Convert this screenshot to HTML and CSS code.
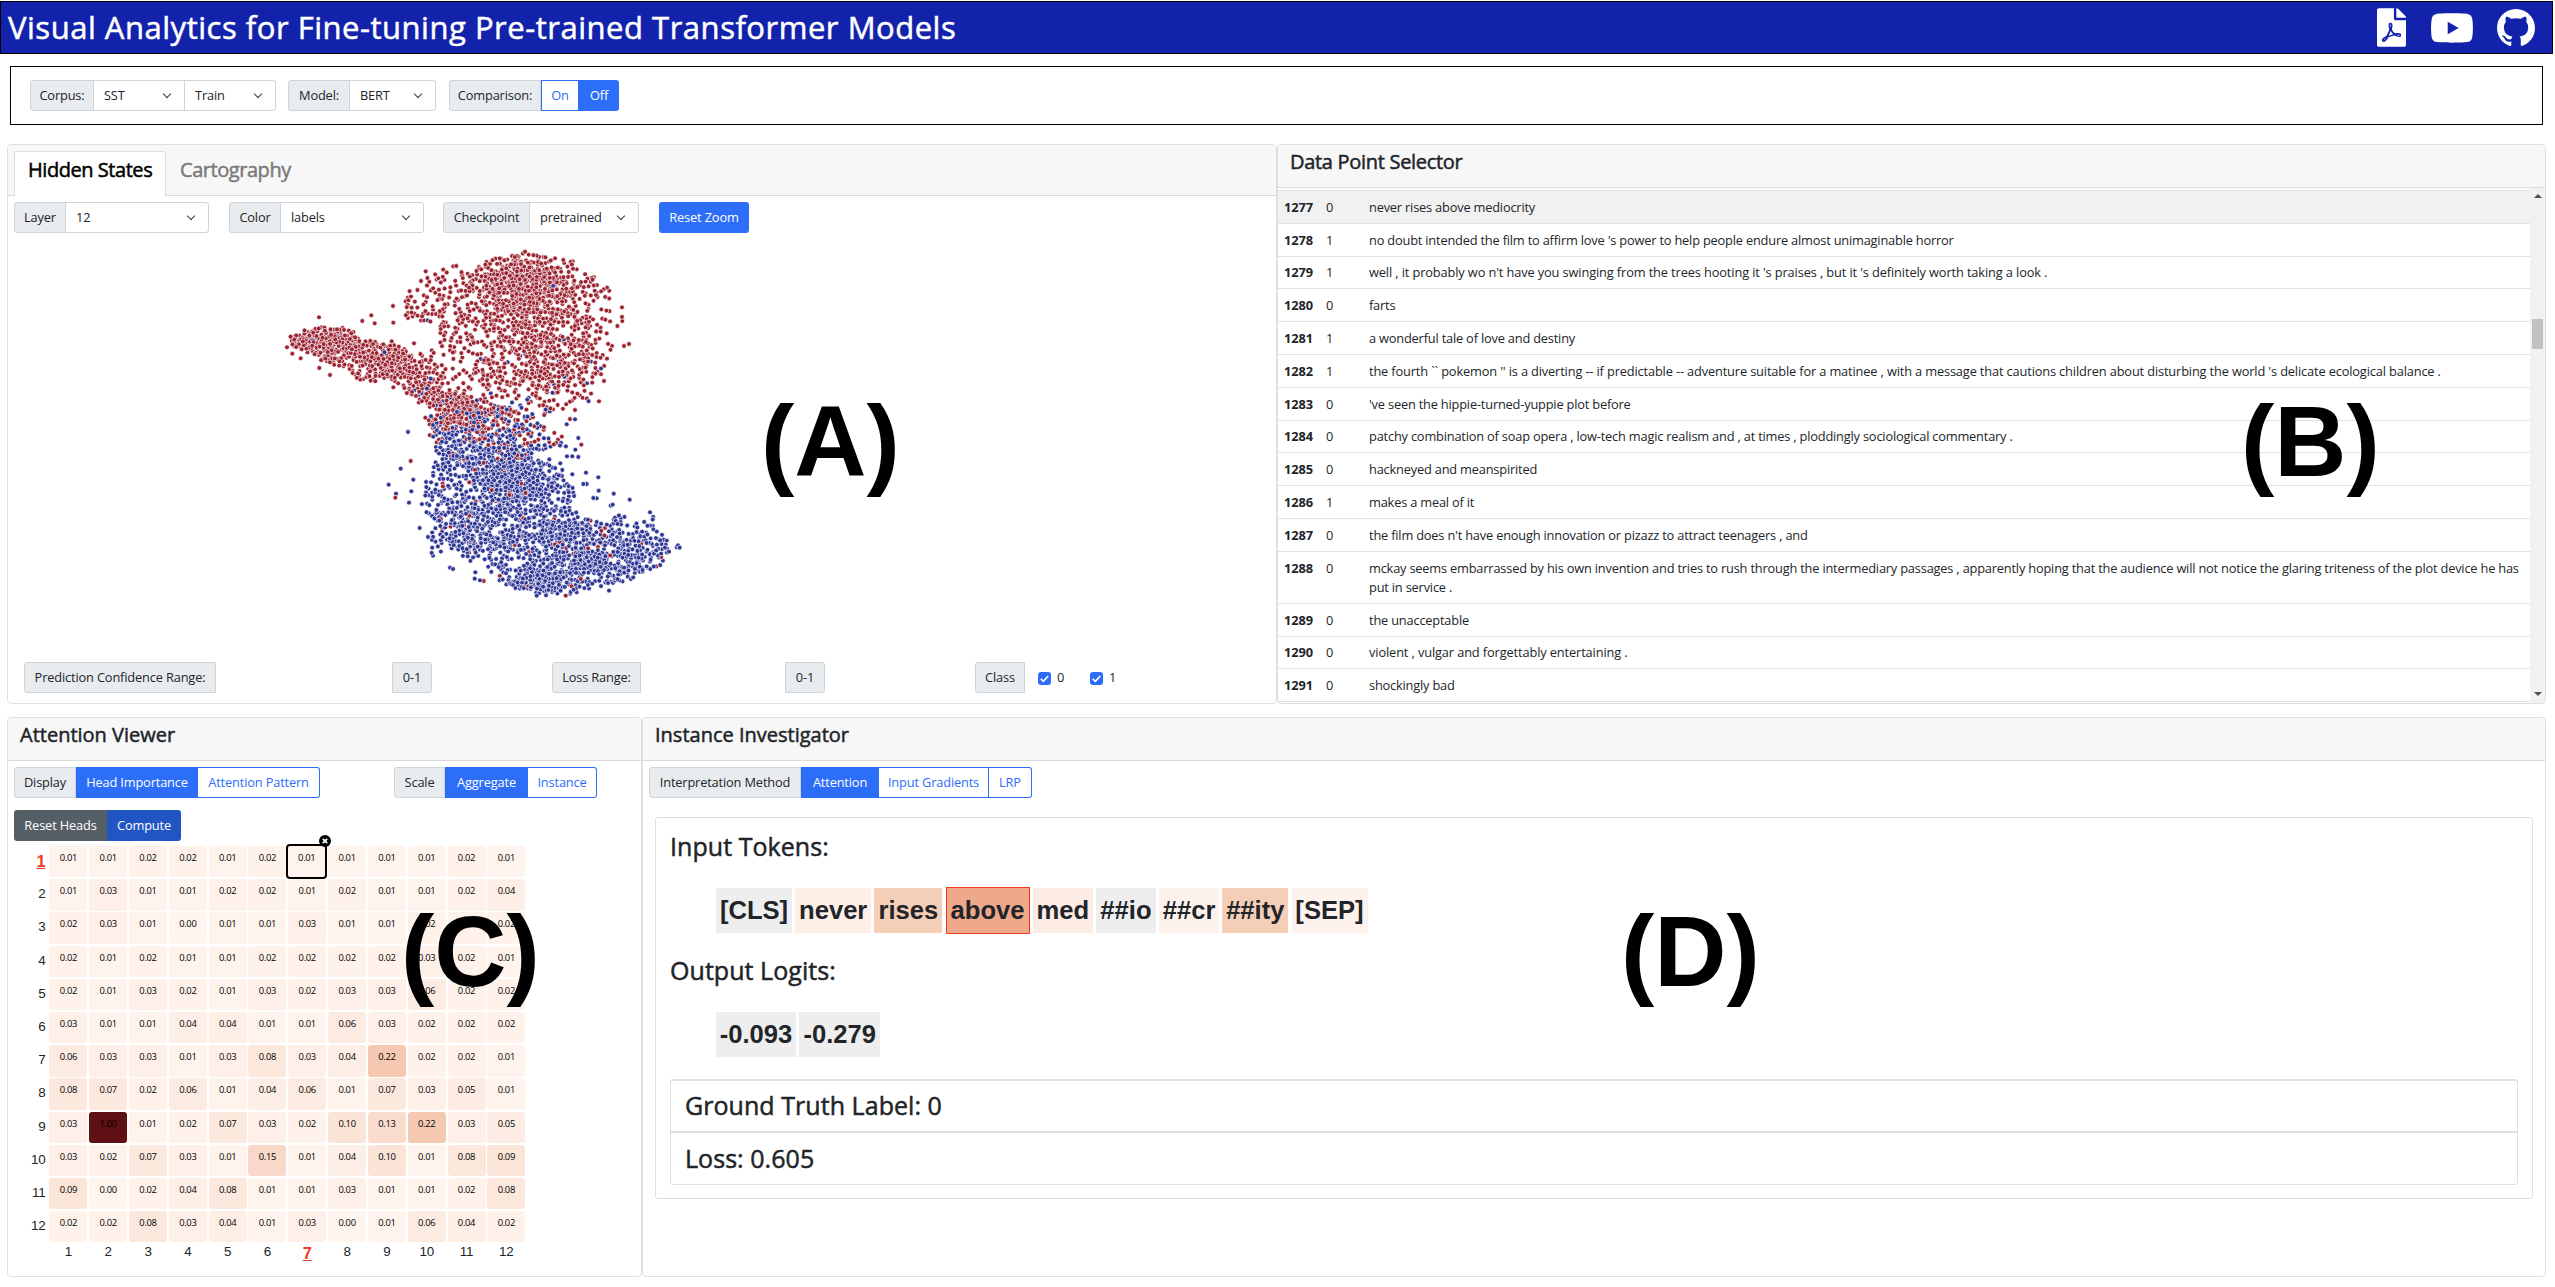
FILE: index.html
```html
<!DOCTYPE html>
<html lang="en">
<head>
<meta charset="utf-8">
<title>Visual Analytics for Fine-tuning Pre-trained Transformer Models</title>
<link rel="stylesheet" href="styles.css">
</head>
<body>
<header class="navbar">
  <h1 class="brand">Visual Analytics for Fine-tuning Pre-trained Transformer Models</h1>
  <nav class="links">
    <svg width="29" height="39" viewBox="0 0 384 512"><path d="M181.9 256.1c-5-16-4.9-46.9-2-46.9 8.4 0 7.6 36.9 2 46.9zm-1.7 47.2c-7.7 20.2-17.3 43.3-28.4 62.7 18.3-7 39-17.2 62.9-21.9-12.7-9.6-24.9-23.4-34.5-40.8zM86.1 428.1c0 .8 13.2-5.4 34.9-40.2-6.7 6.3-29.1 24.5-34.9 40.2zM248 160h136v328c0 13.3-10.7 24-24 24H24c-13.3 0-24-10.7-24-24V24C0 10.7 10.7 0 24 0h200v136c0 13.2 10.8 24 24 24zm-8 171.8c-20-12.2-33.3-29-42.7-53.8 4.5-18.5 11.6-46.6 6.2-64.2-4.7-29.4-42.4-26.5-47.8-6.8-5 18.3-.4 44.1 8.1 77-11.6 27.6-28.7 64.6-40.8 85.8-.1 0-.1.1-.2.1-27.1 13.9-73.6 44.5-54.5 68 5.6 6.9 16 10 21.5 10 17.9 0 35.7-18 61.1-61.8 25.8-8.5 54.1-19.1 79-23.2 21.7 11.8 47.1 19.5 64 19.5 29.2 0 31.2-32 19.7-43.4-13.9-13.6-54.3-9.7-73.6-7.2zM377 105L279 7c-4.5-4.5-10.6-7-17-7h-6v128h128v-6.1c0-6.3-2.5-12.4-7-16.9zm-74.1 255.3c4.1-2.7-2.5-11.9-42.8-9 37.1 15.8 42.8 9 42.8 9z"/></svg>
    <svg width="42" height="30" viewBox="14 64 548 384"><path d="M549.655 124.083c-6.281-23.65-24.787-42.276-48.284-48.597C458.781 64 288 64 288 64S117.22 64 74.629 75.486c-23.497 6.322-42.003 24.947-48.284 48.597-11.412 42.867-11.412 132.305-11.412 132.305s0 89.438 11.412 132.305c6.281 23.65 24.787 41.5 48.284 47.821C117.22 448 288 448 288 448s170.78 0 213.371-11.486c23.497-6.321 42.003-24.171 48.284-47.821 11.412-42.867 11.412-132.305 11.412-132.305s0-89.438-11.412-132.305zm-317.51 213.508V175.185l142.739 81.205-142.739 81.201z"/></svg>
    <svg width="38" height="38" viewBox="0 0 16 16"><path d="M8 0C3.58 0 0 3.58 0 8c0 3.54 2.29 6.53 5.47 7.59.4.07.55-.17.55-.38 0-.19-.01-.82-.01-1.49-2.01.37-2.53-.49-2.69-.94-.09-.23-.48-.94-.82-1.13-.28-.15-.68-.52-.01-.53.63-.01 1.08.58 1.23.82.72 1.21 1.87.87 2.33.66.07-.52.28-.87.51-1.07-1.78-.2-3.64-.89-3.64-3.95 0-.87.31-1.59.82-2.15-.08-.2-.36-1.02.08-2.12 0 0 .67-.21 2.2.82.64-.18 1.32-.27 2-.27.68 0 1.36.09 2 .27 1.53-1.04 2.2-.82 2.2-.82.44 1.1.16 1.92.08 2.12.51.56.82 1.27.82 2.15 0 3.07-1.87 3.75-3.65 3.95.29.25.54.73.54 1.48 0 1.07-.01 1.93-.01 2.2 0 .21.15.46.55.38A8.013 8.013 0 0016 8c0-4.42-3.58-8-8-8z"/></svg>
  </nav>
</header>

<section class="toolbar">
  <div class="group"><span class="label w64">Corpus:</span><span class="select w92">SST<i></i></span><span class="select w92">Train<i></i></span></div>
  <div class="group"><span class="label w62">Model:</span><span class="select w87">BERT<i></i></span></div>
  <div class="group compare"><span class="label w92">Comparison:</span><span class="btn outline w38">On</span><span class="btn solid w40">Off</span></div>
</section>

<main>
  <div class="row">
    <section class="card states">
      <div class="tabs"><h2 class="tab active">Hidden States</h2><h2 class="tab">Cartography</h2></div>
      <div class="controls">
        <div class="group"><span class="label w52">Layer</span><span class="select w144">12<i></i></span></div>
        <div class="group"><span class="label w52">Color</span><span class="select w144">labels<i></i></span></div>
        <div class="group ckpt"><span class="label w87">Checkpoint</span><span class="select w110">pretrained<i></i></span></div>
        <span class="btn solid round w90">Reset Zoom</span>
      </div>
      <svg class="scatter" id="scatter" width="1250" height="430"></svg>
      <div class="filters">
        <span class="label f-pred">Prediction Confidence Range:</span>
        <span class="label right f-val">0-1</span>
        <span class="label f-loss">Loss Range:</span>
        <span class="label right f-val2">0-1</span>
        <span class="label f-class">Class</span>
        <span class="check"><svg viewBox="0 0 14 14" width="13" height="13"><path d="M3 7.4 5.8 10 11 4.3"/></svg>0</span>
        <span class="check"><svg viewBox="0 0 14 14" width="13" height="13"><path d="M3 7.4 5.8 10 11 4.3"/></svg>1</span>
      </div>
    </section>

    <section class="card selector">
      <div class="card-head"><h2 class="ds">Data Point Selector</h2></div>
      <div class="scroller">
        <div class="rows">
          <div class="item hover"><b>1277</b><span>0</span><p>never rises above mediocrity</p></div>
          <div class="item"><b>1278</b><span>1</span><p>no doubt intended the film to affirm love 's power to help people endure almost unimaginable horror</p></div>
          <div class="item"><b>1279</b><span>1</span><p class="wide">well , it probably wo n't have you swinging from the trees hooting it 's praises , but it 's definitely worth taking a look .</p></div>
          <div class="item"><b>1280</b><span>0</span><p>farts</p></div>
          <div class="item"><b>1281</b><span>1</span><p>a wonderful tale of love and destiny</p></div>
          <div class="item"><b>1282</b><span>1</span><p class="wide2">the fourth `` pokemon '' is a diverting -- if predictable -- adventure suitable for a matinee , with a message that cautions children about disturbing the world 's delicate ecological balance .</p></div>
          <div class="item"><b>1283</b><span>0</span><p>'ve seen the hippie-turned-yuppie plot before</p></div>
          <div class="item"><b>1284</b><span>0</span><p>patchy combination of soap opera , low-tech magic realism and , at times , ploddingly sociological commentary .</p></div>
          <div class="item"><b>1285</b><span>0</span><p>hackneyed and meanspirited</p></div>
          <div class="item"><b>1286</b><span>1</span><p>makes a meal of it</p></div>
          <div class="item"><b>1287</b><span>0</span><p>the film does n't have enough innovation or pizazz to attract teenagers , and</p></div>
          <div class="item tall"><b>1288</b><span>0</span><p>mckay seems embarrassed by his own invention and tries to rush through the intermediary passages , apparently hoping that the audience will not notice the glaring triteness of the plot device he has<br>put in service .</p></div>
          <div class="item"><b>1289</b><span>0</span><p>the unacceptable</p></div>
          <div class="item"><b>1290</b><span>0</span><p class="wide">violent , vulgar and forgettably entertaining .</p></div>
          <div class="item"><b>1291</b><span>0</span><p>shockingly bad</p></div>
        </div>
        <div class="scrollbar"><i class="up"></i><div class="thumb"></div><i class="down"></i></div>
      </div>
    </section>
  </div>

  <div class="row">
    <section class="card attention">
      <div class="card-head"><h2>Attention Viewer</h2></div>
      <div class="controls c2">
        <div class="group"><span class="label w62">Display</span><span class="btn solid w122">Head Importance</span><span class="btn outline last w122">Attention Pattern</span></div>
        <div class="group"><span class="label w51">Scale</span><span class="btn solid w83">Aggregate</span><span class="btn outline last w69">Instance</span></div>
      </div>
      <div class="actions"><span class="btn grey">Reset Heads</span><span class="btn navy">Compute</span></div>
      <div class="heat" id="heat"></div>
    </section>

    <section class="card investigator">
      <div class="card-head"><h2>Instance Investigator</h2></div>
      <div class="controls c2">
        <div class="group"><span class="label w152">Interpretation Method</span><span class="btn solid w78">Attention</span><span class="btn outline mid w110">Input Gradients</span><span class="btn outline last w43">LRP</span></div>
      </div>
      <div class="panel">
        <h3 class="t1">Input Tokens:</h3>
        <div class="tokens">
          <span class="tk g" style="width:76px">[CLS]</span><span class="tk p1" style="width:76px">never</span><span class="tk p3" style="width:68px">rises</span><span class="tk sel" style="width:84px">above</span><span class="tk p2" style="width:60px">med</span><span class="tk g" style="width:60px">##io</span><span class="tk p0" style="width:60px">##cr</span><span class="tk p3" style="width:66px">##ity</span><span class="tk p0" style="width:76px">[SEP]</span>
        </div>
        <h3 class="t2">Output Logits:</h3>
        <div class="tokens"><span class="tk g" style="width:80px">-0.093</span><span class="tk g" style="width:81px">-0.279</span></div>
        <div class="facts">
          <h3>Ground Truth Label: 0</h3>
          <h3>Loss: 0.605</h3>
        </div>
      </div>
    </section>
  </div>
</main>

<div class="mark ma">(A)</div>
<div class="mark mb">(B)</div>
<div class="mark mc">(C)</div>
<div class="mark md">(D)</div>
<script src="app.js"></script>
</body>
</html>
```
FILE: app.js
```js
// Head importance, one row per layer
const importance = `
.01 .01 .02 .02 .01 .02 .01 .01 .01 .01 .02 .01
.01 .03 .01 .01 .02 .02 .01 .02 .01 .01 .02 .04
.02 .03 .01 .00 .01 .01 .03 .01 .01 .02 .02 .02
.02 .01 .02 .01 .01 .02 .02 .02 .02 .03 .02 .01
.02 .01 .03 .02 .01 .03 .02 .03 .03 .06 .02 .02
.03 .01 .01 .04 .04 .01 .01 .06 .03 .02 .02 .02
.06 .03 .03 .01 .03 .08 .03 .04 .22 .02 .02 .01
.08 .07 .02 .06 .01 .04 .06 .01 .07 .03 .05 .01
.03 1 .01 .02 .07 .03 .02 .10 .13 .22 .03 .05
.03 .02 .07 .03 .01 .15 .01 .04 .10 .01 .08 .09
.09 .00 .02 .04 .08 .01 .01 .03 .01 .01 .02 .08
.02 .02 .08 .03 .04 .01 .03 .00 .01 .06 .04 .02`.trim().split('\n').map(r => r.split(' ').map(Number));

const stops = [[0, 255, 245, 239], [.03, 254, 240, 232], [.08, 251, 231, 220], [.15, 249, 216, 201], [.22, 245, 201, 177], [1, 95, 16, 20]];
function shade(v) {
  let i = 1;
  while (i < stops.length - 1 && v > stops[i][0]) i++;
  const a = stops[i - 1], b = stops[i], t = (v - a[0]) / (b[0] - a[0]);
  return `rgb(${[1, 2, 3].map(k => Math.round(a[k] + (b[k] - a[k]) * t)).join(',')})`;
}

const closeIcon = '<svg class="close" width="12" height="12" viewBox="0 0 12 12"><circle cx="6" cy="6" r="6"/><path d="M3.8 3.8l4.4 4.4M8.2 3.8L3.8 8.2"/></svg>';
let html = '';
importance.forEach((row, r) => {
  html += `<span class="rl${r === 0 ? ' on' : ''}">${r + 1}</span>`;
  row.forEach((v, c) => {
    const on = r === 0 && c === 6;
    html += `<span class="cell${on ? ' picked' : ''}" style="background:${shade(v)}">${v.toFixed(2)}${on ? closeIcon : ''}</span>`;
  });
});
html += '<span></span>';
for (let c = 1; c <= 12; c++) html += `<span class="cl${c === 7 ? ' on' : ''}">${c}</span>`;
document.getElementById('heat').innerHTML = html;

// Projection of the hidden states: two clusters joined in the middle
let seed = 7;
const rnd = () => { seed = (seed * 1664525 + 1013904223) % 4294967296; return seed / 4294967296; };
const gauss = () => Math.sqrt(-2 * Math.log(rnd() + 1e-9)) * Math.cos(6.2832 * rnd());
const regions = [
  { n: 620, p: [[485,215],[510,175],[560,140],[600,112],[655,104],[690,125],[750,88],[850,70],[900,72],[960,88],[1000,95],[1040,125],[1090,150],[1115,190],[1110,230],[1148,250],[1150,290],[1100,320],[1120,350],[1115,380],[1095,420],[1060,470],[1055,515],[1000,515],[940,560],[860,600],[780,620],[700,600],[620,560],[560,520],[500,490],[500,440],[540,370],[600,350],[600,280],[500,270]] },
  { n: 260, p: [[150,320],[185,300],[245,290],[345,292],[360,330],[420,335],[490,350],[560,400],[590,440],[560,500],[500,480],[440,440],[400,460],[350,450],[320,420],[260,405],[220,375],[150,345]] },
  { n: 90, p: [[500,480],[600,470],[690,510],[750,570],[740,610],[640,600],[600,540],[530,520]] },
  { n: 170, p: [[555,560],[700,540],[870,540],[900,580],[980,620],[985,655],[900,660],[860,690],[600,690],[570,640]] },
  { n: 760, p: [[590,690],[680,650],[800,660],[900,690],[960,720],[1010,790],[1000,840],[1080,880],[1150,850],[1190,870],[1240,860],[1270,890],[1285,960],[1270,1000],[1200,1045],[1120,1060],[1060,1075],[980,1095],[890,1090],[790,1065],[750,1030],[700,1000],[640,960],[575,980],[570,920],[590,880],[545,840],[540,800],[560,750]] }
];
const dense = [[850,150,90,50,260],[760,230,110,70,110],[840,200,60,90,120],[970,350,60,60,110],[890,420,110,50,120],[650,530,60,35,90],[200,330,40,25,50],[280,350,60,30,60],[460,390,50,30,60],[800,710,60,35,120],[850,770,70,40,130],[690,850,60,35,90],[950,900,80,30,130],[1040,1000,90,32,150],[890,1060,45,22,80],[730,940,80,22,70],[1190,960,60,45,60],[740,590,100,45,70],[680,660,60,30,40]];
const inside = (x, y, p) => {
  let c = false;
  for (let i = 0, j = p.length - 1; i < p.length; j = i++)
    if ((p[i][1] > y) !== (p[j][1] > y) && x < (p[j][0] - p[i][0]) * (y - p[i][1]) / (p[j][1] - p[i][1]) + p[i][0]) c = !c;
  return c;
};
const pts = [];
const add = (x, y, d) => {
  for (const q of pts) if ((q[0] - x) ** 2 + (q[1] - y) ** 2 < d * d) return false;
  pts.push([x, y]);
  return true;
};
for (const g of regions) {
  const xs = g.p.map(q => q[0]), ys = g.p.map(q => q[1]);
  const x0 = Math.min(...xs), x1 = Math.max(...xs), y0 = Math.min(...ys), y1 = Math.max(...ys);
  for (let k = 0, t = 0; k < g.n && t < 20000; t++) {
    const x = x0 + rnd() * (x1 - x0), y = y0 + rnd() * (y1 - y0);
    if (inside(x, y, g.p) && add(x, y, 7)) k++;
  }
}
for (const [cx, cy, sx, sy, n] of dense)
  for (let k = 0, t = 0; k < n && t < n * 12; t++) {
    const x = cx + gauss() * sx, y = cy + gauss() * sy;
    if (regions.some(g => inside(x, y, g.p)) && add(x, y, 5)) k++;
  }
[[237,262],[394,256],[367,273],[404,280],[460,278],[459,228],[557,124],[855,65],[998,94],[1146,232],[1167,342],[1152,348],[141,352],[157,371],[182,385],[270,435],[238,414],[460,472],[522,340],[455,334],[1092,453],[1077,514],[446,764],[482,716],[468,791],[466,803],[512,693],[504,606],[520,749],[514,784],[507,818],[539,894],[564,921],[1038,728],[1075,742],[1076,782],[1121,791],[1169,809],[1118,824],[1112,827],[1030,762],[1040,762],[1060,804],[1070,805],[1230,847],[1280,932],[1314,946],[1310,952],[1319,953],[1287,965],[630,1013],[639,1017],[706,1027],[704,1046],[720,1051],[731,1053],[1107,1082],[992,1086],[1010,1087],[890,1097],[918,1096],[977,1097],[1015,624],[1024,644],[1006,659],[1015,681],[997,679],[981,679],[1005,540],[1005,568],[990,567],[980,583],[997,733],[961,700],[928,688],[967,720]].forEach(q => add(q[0], q[1], 0));
const blueShare = (x, y) => x < 480 && y < 500 ? .012 : y < 350 ? .006 : y < 480 ? .04 : y < 540 ? .14 : y < 600 ? .36 : y < 650 ? .66 : y < 700 ? .88 : .965;
document.getElementById('scatter').innerHTML = pts.sort(() => rnd() - .5).map(([x, y]) =>
  `<circle class="${rnd() < blueShare(x, y) ? 'neg' : 'pos'}" cx="${(x / 3 + 232).toFixed(1)}" cy="${(y / 3 - 3).toFixed(1)}" r="2.4"/>`).join('');
```
FILE: styles.css
```css
* { box-sizing: border-box; }
body {
  margin: 0;
  background: #fff;
  color: #212529;
  font: 12.8px/19.2px "Open Sans", "Noto Sans", sans-serif;
  letter-spacing: -0.15px;
}
h1, h2, h3, p { margin: 0; font-weight: 500; }
h1, h2, h3 { -webkit-text-stroke: .5px currentColor; }

.navbar {
  display: flex;
  align-items: center;
  justify-content: space-between;
  width: 2553px;
  height: 53px;
  margin-top: 1px;
  padding: 0 17px 0 7px;
  border: 1px solid #000;
  background: #1322ab;
}
.brand { color: #fff; font-size: 31px; line-height: 48px; letter-spacing: .52px; padding-bottom: 2px; }
.links { display: flex; align-items: center; gap: 24.5px; }
.links svg { fill: #fff; }

.toolbar {
  display: flex;
  gap: 12px;
  width: 2533px;
  height: 59px;
  margin: 12px 0 19px 10px;
  padding: 13px 0 0 19px;
  border: 1px solid #000;
}
.compare { margin-left: 1px; }

/* input groups */
.group { display: flex; height: 31px; }
.label, .select, .btn { display: flex; align-items: center; height: 31px; white-space: nowrap; }
.label { justify-content: center; background: #e9ecef; border: 1px solid #ced4da; border-radius: 3px 0 0 3px; }
.label.right { border-radius: 0 3px 3px 0; }
.select { justify-content: space-between; padding: 0 11px 0 10px; border: 1px solid #ced4da; margin-left: -1px; }
.select:last-child { border-radius: 0 3px 3px 0; }
.select i { width: 6px; height: 6px; margin: -4px 3px 0 0; border: solid #343a40; border-width: 0 1.5px 1.5px 0; transform: rotate(45deg); }
.btn { justify-content: center; }
.solid { background: #2d6ef9; color: #fff; }
.outline { color: #2d6ef9; border: 1px solid #2d6ef9; }
.outline.last, .solid:last-child { border-radius: 0 3px 3px 0; }
.outline.last, .outline.mid { border-left: 0; }
.solid.round { border-radius: 3px; }
.w38 { width: 38px; } .w40 { width: 40px; } .w43 { width: 43px; } .w51 { width: 51px; } .w52 { width: 52px; }
.w62 { width: 62px; } .w64 { width: 64px; } .w69 { width: 69px; } .w78 { width: 78px; } .w83 { width: 83px; }
.w87 { width: 87px; } .w90 { width: 90px; } .w92 { width: 92px; } .w110 { width: 110px; } .w122 { width: 122px; }
.w144 { width: 144px; } .w152 { width: 152px; }

/* cards */
main { display: flex; flex-direction: column; gap: 13px; padding-left: 7px; }
.row { display: flex; height: 560px; }
.card { border: 1px solid #dfdfdf; border-radius: 4px; height: 560px; overflow: hidden; }
.states { width: 1270px; }
.selector { width: 1269px; }
.attention { width: 635px; }
.investigator { width: 1904px; }
.card-head { height: 43px; padding: 3px 12px; background: #f7f7f7; border-bottom: 1px solid #dadada; }
h2 { font-size: 20px; line-height: 28px; letter-spacing: 0; }
h2.ds { letter-spacing: -.3px; }

.tabs { display: flex; height: 51px; padding: 6px 0 0 6px; background: #f7f7f7; border-bottom: 1px solid #d8d8d8; }
.tab { width: 152px; height: 45px; line-height: 38px; padding-left: 14px; letter-spacing: -.45px; color: #7b7b7b; }
.tab.active { color: #000; background: #fff; border: 1px solid #dfdfdf; border-bottom: 0; border-radius: 3px 3px 0 0; padding-left: 13px; line-height: 36px; }
.controls { display: flex; gap: 20px; padding: 6px 0 0 6px; }
.controls .ckpt { margin-left: -1px; }
.scatter { display: block; height: 430px; }
.pos { fill: #9c2431; } .neg { fill: #2f3795; }
.scatter circle { stroke: #fff; stroke-width: .9; stroke-opacity: .75; }
.filters { display: flex; padding-left: 16px; margin-top: -1px; }
.f-pred { width: 192px; }
.f-val { width: 40px; margin-left: 176px; }
.f-loss { width: 89px; margin-left: 120px; }
.f-val2 { width: 40px; margin-left: 144px; }
.f-class { width: 50px; margin: 0 13px 0 150px; }
.check { display: flex; align-items: center; gap: 6px; width: 52px; height: 31px; padding-top: 1px; }
.check svg { background: #2d6ef9; border-radius: 3px; }
.check path { fill: none; stroke: #fff; stroke-width: 1.8; }

/* data point list */
.scroller { display: flex; height: 515px; }
.rows { flex: 1; padding-top: 2px; }
.item { display: flex; height: 32.8px; padding: 6.8px 0 0 6px; border-top: 1px solid #dee2e6; letter-spacing: -.185px; }
.item:last-child { height: 33.8px; border-bottom: 1px solid #dee2e6; }
.item.tall { height: 52px; }
.item.hover { background: #f1f1f1; }
.item b { width: 42px; letter-spacing: -.05px; }
.item span { width: 43px; }
.item p { white-space: nowrap; font-weight: 400; }
.item .wide { letter-spacing: -.12px; }
.item .wide2 { letter-spacing: -.143px; }
.scrollbar { display: flex; flex-direction: column; align-items: center; width: 15px; background: #f1f1f1; }
.up, .down { border: 4px solid transparent; height: 0; width: 0; }
.up { margin-top: 2px; border-bottom-color: #505050; }
.down { margin-top: 343px; border-top-color: #505050; }
.thumb { width: 11px; height: 30px; margin-top: 121px; background: #c1c1c1; }

/* attention heads */
.c2 .group + .group { margin-left: 54px; }
.actions { display: flex; padding: 12px 0 0 6px; color: #fff; }
.grey { width: 93px; background: #575f66; border-radius: 3px 0 0 3px; }
.navy { width: 74px; background: #2255c4; border-radius: 0 3px 3px 0; }
.heat { display: grid; grid-template-columns: 41.4px repeat(12, 39.82px); grid-template-rows: repeat(12, 33.2px) 24px; margin-top: 5px; }
.cell { position: relative; width: 38px; height: 31.4px; border-radius: 3px; color: #000; font-size: 9.4px; line-height: 24px; letter-spacing: -.3px; text-align: center; }
.picked { margin: -2px 0 0 -2px; width: 41px; height: 35px; border: 2px solid #000; border-radius: 4px; }
.close { position: absolute; right: -6px; top: -11px; }
.close path { stroke: #fff; stroke-width: 1.8; }
.rl, .cl { font: 13.4px/30px "Liberation Sans", sans-serif; letter-spacing: -.2px; }
.rl { text-align: right; padding-right: 4px; }
.cl { width: 38px; text-align: center; line-height: 16px; }
.rl.on, .cl.on { color: #ee3b24; font-weight: bold; font-size: 16.5px; text-decoration: underline; }
.cl.on { line-height: 18px; }

/* instance panel */
.panel { width: 1878px; height: 382px; margin: 19px 0 0 12px; padding: 10px 14px; border: 1px solid #dfdfdf; border-radius: 3px; }
h3 { font-size: 25px; line-height: 36px; letter-spacing: .05px; }
.tokens { display: flex; gap: 3.2px; align-items: center; height: 47px; padding-left: 46px; margin-top: 23px; }
.tk { display: flex; align-items: center; justify-content: center; height: 45px; font: bold 25.6px/45px "Liberation Sans", sans-serif; letter-spacing: 0; }
.g { background: #eee; } .p0 { background: #fef2ec; } .p1 { background: #feefe6; } .p2 { background: #fdece3; } .p3 { background: #f5ceb8; }
.sel { background: #f0a88a; border: 1px solid #ee3b1c; height: 47px; }
.t2 { margin-top: 18px; }
.facts { margin-top: 21px; border: 1px solid #dfdfdf; border-top-width: 2px; border-radius: 3px; }
.facts h3 { height: 50px; line-height: 49px; padding-left: 14px; }
.facts h3 + h3 { border-top: 2px solid #dfdfdf; height: 53px; line-height: 50px; }

/* region letters laid over the dashboard */
.mark { position: absolute; font: bold 100px/100px "Liberation Sans", sans-serif; color: #000; letter-spacing: 0; }
.ma { left: 761px; top: 391px; }
.mb { left: 2241px; top: 391px; }
.mc { left: 401px; top: 901px; }
.md { left: 1621px; top: 901px; }
```
